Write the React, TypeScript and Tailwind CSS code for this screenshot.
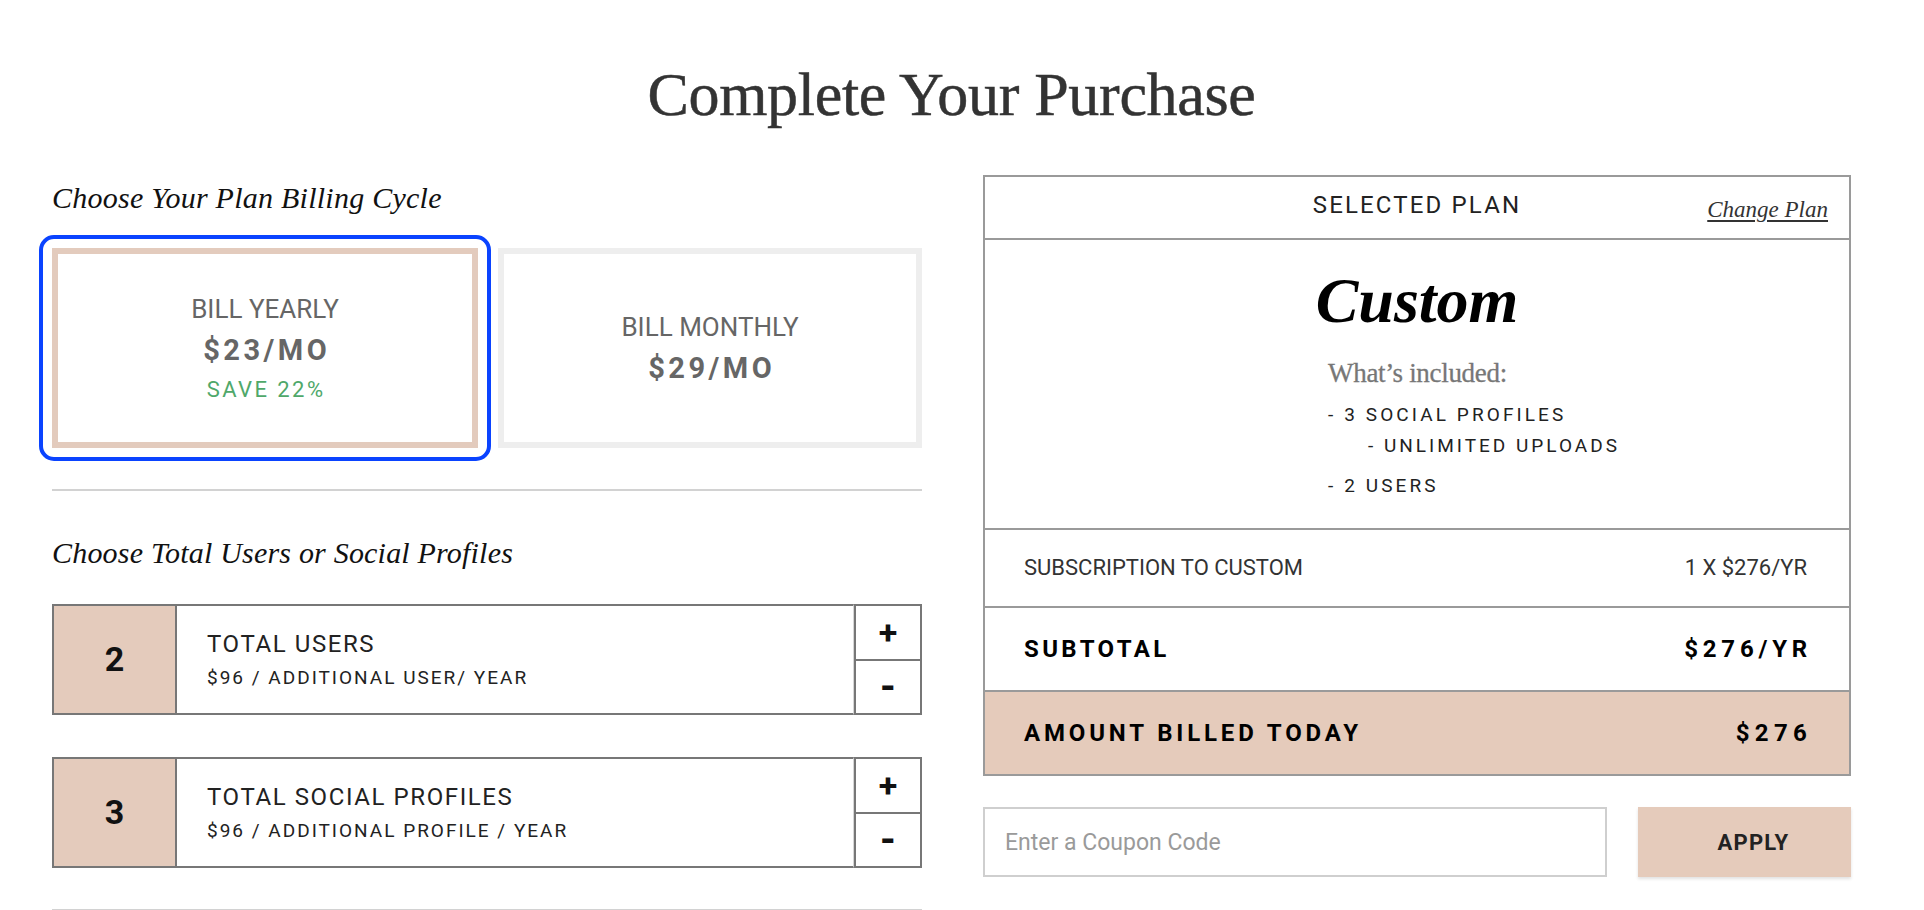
import React from "react";

function QtyRow({ n, title, sub }: { n: string; title: string; sub: string }) {
  return (
    <div className="flex h-[111px]">
      <div className="flex w-[125px] items-center justify-center border-2 border-[#777] bg-[#e4cbbc] text-[34px] font-bold text-[#111]">
        {n}
      </div>
      <div className="flex flex-1 flex-col justify-center border-y-2 border-r border-[#777] border-r-[#d6d6d6] pl-[30px]">
        <div className="text-[24px] leading-[28px] tracking-[1.6px] text-[#222]">{title}</div>
        <div className="mt-[8px] text-[19px] leading-[24px] tracking-[2px] text-[#222]">{sub}</div>
      </div>
      <div className="flex w-[68px] flex-col border-2 border-[#777]">
        <div className="flex flex-1 items-center justify-center border-b-2 border-[#777] text-[34px] font-bold leading-none text-[#111]">
          +
        </div>
        <div className="flex flex-1 items-center justify-center text-[40px] font-bold leading-none text-[#111]">
          -
        </div>
      </div>
    </div>
  );
}

export default function App() {
  return (
    <div className="h-[910px] w-full overflow-hidden bg-white font-['Roboto',sans-serif]">
      <div className="w-[1902px] pl-[52px] pr-[51px]">
        <h1 className="pt-[63px] text-center font-['Liberation_Serif',serif] text-[62px] leading-[62px] tracking-[-0.3px] text-[#333] [-webkit-text-stroke:0.5px_#333]">
          Complete Your Purchase
        </h1>

        <div className="mt-[50px] flex justify-between">
          {/* Left column */}
          <div className="w-[870px]">
            <h2 className="mt-[5px] font-['Liberation_Serif',serif] text-[30px] italic leading-[36px] tracking-[0.25px] text-[#111]">
              Choose Your Plan Billing Cycle
            </h2>

            <div className="mt-[32px] flex h-[200px] gap-[20px]">
              <div className="-m-[13px] w-[452px] shrink-0 rounded-[15px] border-4 border-[#0a43ff] p-[9px]">
                <div className="flex h-full flex-col items-center justify-center border-[6px] border-[#e3cbbd] bg-white">
                  <div className="text-[26px] leading-[32px] text-[#666]">BILL YEARLY</div>
                  <div className="mt-[8px] pl-[0.12em] text-[29px] font-bold leading-[34px] tracking-[0.12em] text-[#666]">
                    $23/MO
                  </div>
                  <div className="mt-[9px] pl-[0.1em] text-[22px] leading-[28px] tracking-[0.11em] text-[#4fa86a]">
                    SAVE 22%
                  </div>
                </div>
              </div>
              <div className="flex flex-1 flex-col items-center justify-center border-[6px] border-[#eeeeee]">
                <div className="text-[26px] leading-[32px] text-[#666]">BILL MONTHLY</div>
                <div className="mt-[8px] pl-[0.12em] text-[29px] font-bold leading-[34px] tracking-[0.12em] text-[#666]">
                  $29/MO
                </div>
              </div>
            </div>

            <div className="mt-[41px] h-[2px] bg-[#d2d2d2]" />

            <h2 className="mt-[44px] font-['Liberation_Serif',serif] text-[30px] italic leading-[36px] tracking-[0.2px] text-[#111]">
              Choose Total Users or Social Profiles
            </h2>

            <div className="mt-[33px]">
              <QtyRow n="2" title="TOTAL USERS" sub="$96 / ADDITIONAL USER/ YEAR" />
            </div>
            <div className="mt-[42px]">
              <QtyRow n="3" title="TOTAL SOCIAL PROFILES" sub="$96 / ADDITIONAL PROFILE / YEAR" />
            </div>

            <div className="mt-[41px] h-[2px] bg-[#d2d2d2]" />
          </div>

          {/* Right column */}
          <div className="w-[868px]">
            <div className="border-2 border-[#9a9a9a]">
              <div className="grid h-[63px] grid-cols-[1fr_auto_1fr] items-center border-b-2 border-[#9a9a9a] pb-[5px]">
                <div />
                <div className="text-[24px] leading-[28px] tracking-[0.09em] text-[#222]">SELECTED PLAN</div>
                <div className="flex justify-end pr-[21px] pt-[10px]">
                  <span className="font-['Liberation_Serif',serif] text-[23px] italic leading-[28px] text-[#333] underline underline-offset-[3px]">
                    Change Plan
                  </span>
                </div>
              </div>

              <div className="border-b-2 border-[#9a9a9a] pb-[29px] pt-[25px]">
                <div className="text-center font-['Liberation_Serif',serif] text-[64px] font-bold italic leading-[72px] text-black">
                  Custom
                </div>
                <div className="pl-[343px]">
                  <div className="mt-[20px] font-['Liberation_Serif',serif] text-[27px] leading-[32px] tracking-[-0.3px] text-[#777] [-webkit-text-stroke:0.3px_#777]">
                    What’s included:
                  </div>
                  <div className="mt-[13px] text-[19px] leading-[26px] tracking-[3.1px] text-[#222]">- 3 SOCIAL PROFILES</div>
                  <div className="mt-[5px] pl-[40px] text-[19px] leading-[26px] tracking-[3px] text-[#222]">
                    - UNLIMITED UPLOADS
                  </div>
                  <div className="mt-[14px] text-[19px] leading-[26px] tracking-[3.1px] text-[#222]">- 2 USERS</div>
                </div>
              </div>

              <div className="flex h-[78px] items-center justify-between border-b-2 border-[#9a9a9a] pl-[39px] pr-[42px] text-[22px] leading-[28px] text-[#333]">
                <span>SUBSCRIPTION TO CUSTOM</span>
                <span>1 X $276/YR</span>
              </div>

              <div className="flex h-[84px] items-center justify-between border-b-2 border-[#9a9a9a] pl-[39px] pr-[37px] text-[24px] font-bold leading-[28px] tracking-[0.14em] text-black">
                <span>SUBTOTAL</span>
                <span className="tracking-[0.2em]">$276/YR</span>
              </div>

              <div className="flex h-[82px] items-center justify-between bg-[#e5cbbb] pl-[39px] pr-[37px] text-[24px] font-bold leading-[28px] tracking-[0.16em] text-black">
                <span>AMOUNT BILLED TODAY</span>
                <span className="tracking-[0.22em]">$276</span>
              </div>
            </div>

            <div className="mt-[31px] flex h-[70px] gap-[31px]">
              <input
                className="h-full w-[624px] border-2 border-[#cfcfcf] px-[20px] text-[23px] text-[#333] outline-none placeholder:text-[#9a9a9a]"
                placeholder="Enter a Coupon Code"
              />
              <button className="flex flex-1 items-center justify-center bg-[#e5cbbb] pl-[18px] text-[22px] font-bold tracking-[1.2px] text-[#222] shadow-[0_2px_3px_rgba(0,0,0,0.12)]">
                APPLY
              </button>
            </div>
          </div>
        </div>
      </div>
    </div>
  );
}
